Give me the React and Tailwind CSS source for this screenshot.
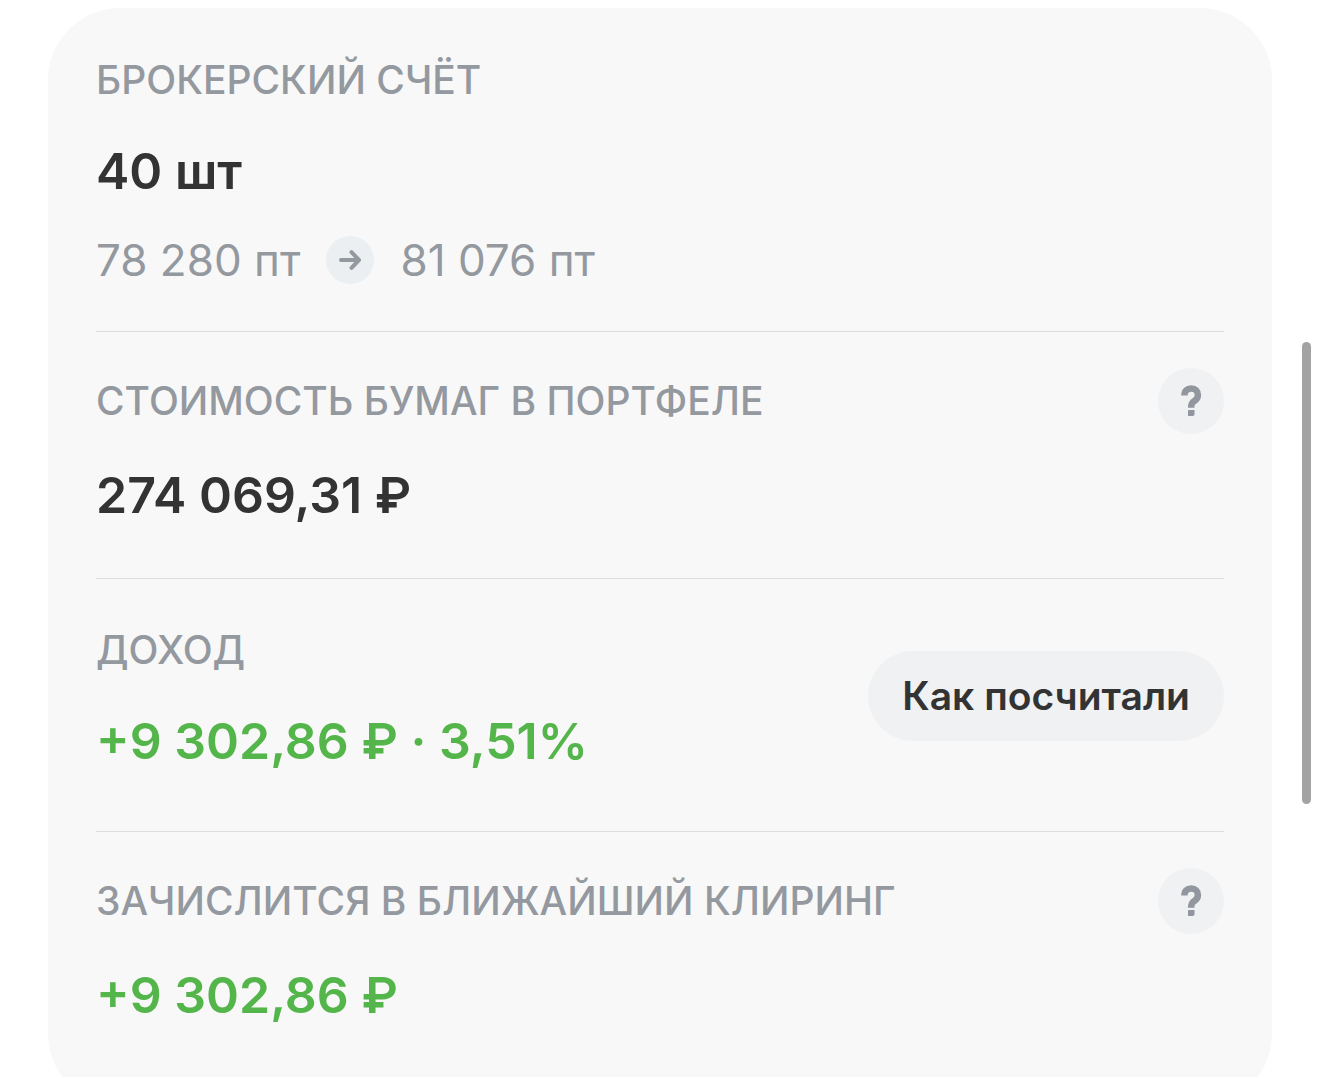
function Caption({ children }) {
  return (
    <h2 className="text-[39px] leading-[48px] font-medium text-[#94989f]">
      {children}
    </h2>
  );
}

function Amount({ children, className }) {
  return (
    <p className={`text-[50px] leading-[62px] font-semibold ${className}`}>
      {children}
    </p>
  );
}

function HelpButton({ label }) {
  return (
    <button
      type="button"
      aria-label={label}
      className="flex size-[66px] shrink-0 items-center justify-center rounded-full bg-[#eff1f3] text-[#92979f]"
    >
      <svg viewBox="0 0 22 32" className="h-8 w-[22px]" fill="none" aria-hidden="true">
        <path
          d="M4.400 10.600C4.400 6 7 3.600 11.200 3.600s6.700 2.600 6.700 6.500c0 3.300-1.600 4.800-3.600 6-2.200 1.300-3.100 2.300-3.100 6.600"
          stroke="currentColor"
          strokeWidth="6.500"
        />
        <path
          d="M8.800 25H14.500v4.200a1.800 1.800 0 0 1-1.800 1.800H8v-5.200a.8.8 0 0 1 .8-.8Z"
          fill="currentColor"
        />
      </svg>
    </button>
  );
}

export default function App() {
  return (
    <div className="flex h-screen items-start overflow-hidden bg-white pt-2 font-['Inter',sans-serif]">
      <main className="ml-12 flex-1 rounded-[72px] bg-[#f8f8f8] px-12 pb-20">
        <section className="border-b border-[#dcdddf] pt-12 pb-[43px]">
          <Caption>БРОКЕРСКИЙ СЧЁТ</Caption>
          <Amount className="mt-9 text-[#333333]">40 шт</Amount>
          <div className="mt-[30px] flex items-center text-[44px] leading-[56px] text-[#94989f]">
            <span>78 280 пт</span>
            <span className="mx-[26px] flex size-12 items-center justify-center rounded-full bg-[#eceff1]">
              <svg viewBox="0 0 24 24" className="size-6" fill="none" aria-hidden="true">
                <path
                  d="M3 12h18M13.500 4.200l7.500 7.800-7.500 7.800"
                  stroke="currentColor"
                  strokeWidth="4"
                  strokeLinecap="round"
                  strokeLinejoin="round"
                />
              </svg>
            </span>
            <span>81 076 пт</span>
          </div>
        </section>

        <section className="border-b border-[#dcdddf] pt-9 pb-[52px]">
          <div className="flex items-center justify-between">
            <Caption>СТОИМОСТЬ БУМАГ В ПОРТФЕЛЕ</Caption>
            <HelpButton label="Подробнее о стоимости бумаг" />
          </div>
          <Amount className="mt-[30px] text-[#333333]">274 069,31 ₽</Amount>
        </section>

        <section className="flex items-start justify-between border-b border-[#dcdddf] pt-[47px] pb-[59px]">
          <div>
            <Caption>ДОХОД</Caption>
            <Amount className="mt-9 text-[#54b54a]">+9 302,86 ₽ · 3,51%</Amount>
          </div>
          <button
            type="button"
            className="mt-[25px] h-[90px] rounded-[45px] bg-[#eff1f3] px-[34px] text-[39px] font-semibold text-[#333333]"
          >
            Как посчитали
          </button>
        </section>

        <section className="pt-9">
          <div className="flex items-center justify-between">
            <Caption>ЗАЧИСЛИТСЯ В БЛИЖАЙШИЙ КЛИРИНГ</Caption>
            <HelpButton label="Подробнее о клиринге" />
          </div>
          <Amount className="mt-[30px] text-[#54b54a]">+9 302,86 ₽</Amount>
        </section>
      </main>
      <div className="flex w-12 shrink-0 justify-end pr-[9px]">
        <div className="mt-[334px] h-[462px] w-[9px] rounded-full bg-[#a3a3a3]" />
      </div>
    </div>
  );
}
